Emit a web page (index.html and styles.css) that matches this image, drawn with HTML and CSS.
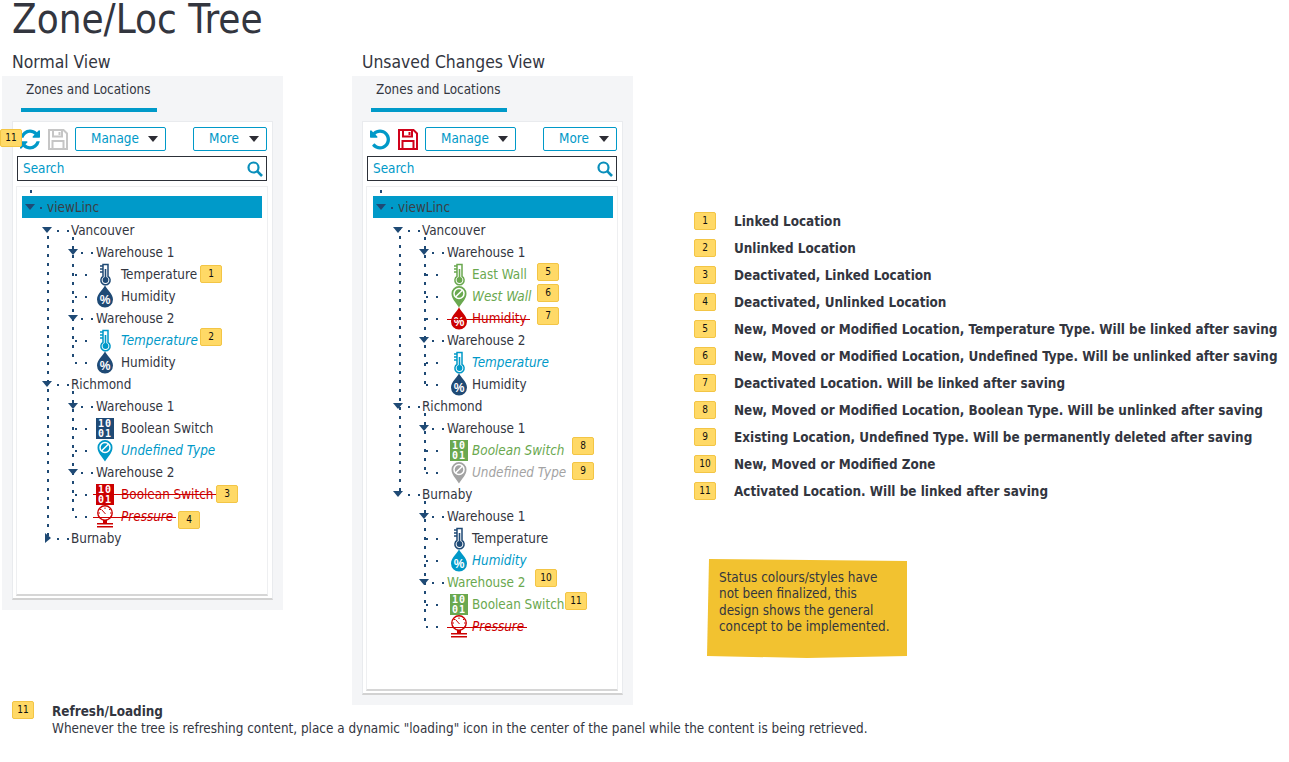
FILE: index.html
```html
<!DOCTYPE html>
<html lang="en">
<head>
    <meta charset="UTF-8">
    <meta name="viewport" content="width=device-width, initial-scale=1.0">
    <title>Zone/Loc Tree</title>
    <link rel="stylesheet" href="styles.css">
</head>
<body>
    <svg class="sprite" xmlns="http://www.w3.org/2000/svg">
        <symbol id="thermo" viewBox="0 0 18 23">
            <path d="M7 1.500h5v11.800a4.600 4.600 0 1 1-5 0z" fill="none" stroke="currentColor" stroke-width="1.500"/>
            <path d="M4 3h3M4 6h3M4 9h3" stroke="currentColor" stroke-width="1.300"/>
            <circle cx="9.500" cy="17" r="2.900" fill="currentColor"/>
            <rect x="8.700" y="6" width="1.600" height="9" fill="currentColor"/>
        </symbol>
        <symbol id="drop" viewBox="0 0 18 23">
            <path d="M9 0c1 4 8 8.500 8 14.500a8 8 0 0 1-16 0C1 8.500 8 4 9 0z" fill="currentColor"/>
        </symbol>
        <symbol id="pin" viewBox="0 0 18 23">
            <path d="M9 22.500C6 17.500 1.500 14 1.500 8.500a7.500 7.500 0 0 1 15 0C16.500 14 12 17.500 9 22.500z" fill="currentColor"/>
            <circle cx="9" cy="8.500" r="5" fill="none" stroke="#fff" stroke-width="1.500"/>
            <path d="M5.700 11.800l6.600-6.600" stroke="#fff" stroke-width="1.500"/>
        </symbol>
        <symbol id="gauge" viewBox="0 0 18 23">
            <circle cx="9" cy="8" r="7.200" fill="none" stroke="currentColor" stroke-width="1.400"/>
            <path d="M5.500 4.500l4 4.500M9 2.500v1.500M4 4l1 1M14 4l-1 1M2.500 8H4M15.500 8H14" stroke="currentColor" stroke-width="1"/>
            <path d="M7 15h4v3H7z" fill="currentColor"/>
            <path d="M1 18.800h16M1 21.800h16" stroke="currentColor" stroke-width="1.600"/>
        </symbol>
        <symbol id="refresh" viewBox="128 128 1536 1536">
            <path fill="currentColor" d="M1639 1056q0 5-1 7-64 268-268 434.500t-478 166.500q-146 0-282.500-55t-243.500-157l-129 129q-19 19-45 19t-45-19-19-45v-448q0-26 19-45t45-19h448q26 0 45 19t19 45-19 45l-137 137q71 66 161 102t187 36q134 0 250-65t186-179q11-17 53-117 8-23 30-23h192q13 0 22.500 9.500t9.500 22.500zm25-800v448q0 26-19 45t-45 19h-448q-26 0-45-19t-19-45 19-45l138-138q-148-137-349-137-134 0-250 65t-186 179q-11 17-53 117-8 23-30 23h-199q-13 0-22.500-9.500t-9.500-22.500v-7q65-268 270-434.500t480-166.500q146 0 284 55.500t245 156.500l130-129q19-19 45-19t45 19 19 45z"/>
        </symbol>
        <symbol id="undo" viewBox="128 128 1536 1536">
            <path fill="currentColor" d="M1664 896q0 156-61 298t-164 245-245 164-298 61q-172 0-327-72.500t-264-204.500q-7-10-6.500-22.500t8.500-20.500l137-138q10-9 25-9 16 2 23 12 73 95 179 147t225 52q104 0 198.500-40.500t163.500-109.500 109.500-163.500 40.500-198.500-40.500-198.500-109.500-163.500-163.500-109.500-198.500-40.500q-98 0-188 35.500t-160 101.500l137 138q31 30 14 69-17 40-59 40h-448q-26 0-45-19t-19-45v-448q0-42 40-59 39-17 69 14l130 129q107-101 244.500-156.500t284.500-55.500q156 0 298 61t245 164 164 245 61 298z"/>
        </symbol>
        <symbol id="save" viewBox="0 0 20 21">
            <path d="M1 1h14.500L19 4.500V20H1z" fill="none" stroke="currentColor" stroke-width="2"/>
            <path d="M5 1.500v6h9v-6M4.500 20v-8h11v8" fill="none" stroke="currentColor" stroke-width="2"/>
            <path d="M10.500 3h2v3h-2z" fill="currentColor"/>
        </symbol>
        <symbol id="search" viewBox="0 0 16 16">
            <circle cx="6.500" cy="6.500" r="5" fill="none" stroke="currentColor" stroke-width="2.200"/>
            <path d="M10.200 10.200L15 15" stroke="currentColor" stroke-width="2.600"/>
        </symbol>
    </svg>

    <h1>Zone/Loc Tree</h1>

    <div class="page">
        <div class="view">
            <h2>Normal View</h2>
            <div class="panel">
                <div class="tab">Zones and Locations</div>
                <div class="card">
                    <div class="toolbar">
                        <span class="tag tag-refresh">11</span>
                        <svg class="tool-icon c-blue"><use href="#refresh"/></svg>
                        <svg class="tool-icon tool-save c-grey"><use href="#save"/></svg>
                        <button class="btn btn-manage">Manage<i class="caret"></i></button>
                        <button class="btn btn-more">More<i class="caret"></i></button>
                    </div>
                    <div class="search">Search<svg class="search-icon"><use href="#search"/></svg></div>
                    <div class="tree tree-normal">
                        <div class="row root"><i class="arrow"></i>viewLinc</div>
                        <div class="row zone first"><i class="arrow"></i>Vancouver</div>
                        <div class="zones zones-normal">
                            <div class="wares">
                                <div class="row ware"><i class="arrow"></i>Warehouse 1</div>
                                <div class="row leaf"><svg class="icon c-navy"><use href="#thermo"/></svg>Temperature<span class="tag tag-a">1</span></div>
                                <div class="row leaf"><span class="icon drop c-navy"><svg><use href="#drop"/></svg><b>%</b></span>Humidity</div>
                                <div class="row ware"><i class="arrow"></i>Warehouse 2</div>
                                <div class="row leaf unlinked"><svg class="icon c-blue"><use href="#thermo"/></svg>Temperature<span class="tag tag-b">2</span></div>
                                <div class="row leaf"><span class="icon drop c-navy"><svg><use href="#drop"/></svg><b>%</b></span>Humidity</div>
                            </div>
                            <div class="row zone"><i class="arrow"></i>Richmond</div>
                            <div class="wares">
                                <div class="row ware"><i class="arrow"></i>Warehouse 1</div>
                                <div class="row leaf"><span class="icon bool c-navy"><b>10<br>01</b></span>Boolean Switch</div>
                                <div class="row leaf unlinked"><svg class="icon c-blue"><use href="#pin"/></svg>Undefined Type</div>
                                <div class="row ware"><i class="arrow"></i>Warehouse 2</div>
                                <div class="row leaf deleted"><span class="struck struck-high"><span class="icon bool"><b>10<br>01</b></span>Boolean Switch</span><span class="tag tag-c">3</span></div>
                                <div class="row leaf deleted unlinked-red"><span class="struck"><svg class="icon"><use href="#gauge"/></svg>Pressure</span><span class="tag tag-d">4</span></div>
                            </div>
                            <div class="row zone"><i class="arrow arrow-right"></i>Burnaby</div>
                        </div>
                    </div>
                </div>
            </div>
            <div class="refresh-note">
                <span class="tag">11</span>
                <div class="refresh-text">
                    <b>Refresh/Loading</b>
                    <p>Whenever the tree is refreshing content, place a dynamic "loading" icon in the center of the panel while the content is being retrieved.</p>
                </div>
            </div>
        </div>

        <div class="view view-changed">
            <h2>Unsaved Changes View</h2>
            <div class="panel">
                <div class="tab">Zones and Locations</div>
                <div class="card">
                    <div class="toolbar">
                        <svg class="tool-icon c-blue"><use href="#undo"/></svg>
                        <svg class="tool-icon tool-save c-red"><use href="#save"/></svg>
                        <button class="btn btn-manage">Manage<i class="caret"></i></button>
                        <button class="btn btn-more">More<i class="caret"></i></button>
                    </div>
                    <div class="search">Search<svg class="search-icon"><use href="#search"/></svg></div>
                    <div class="tree tree-changed">
                        <div class="row root"><i class="arrow"></i>viewLinc</div>
                        <div class="row zone first"><i class="arrow"></i>Vancouver</div>
                        <div class="zones zones-changed">
                            <div class="wares">
                                <div class="row ware"><i class="arrow"></i>Warehouse 1</div>
                                <div class="row leaf added"><svg class="icon"><use href="#thermo"/></svg>East Wall<span class="tag tag-e">5</span></div>
                                <div class="row leaf added unlinked-green"><svg class="icon"><use href="#pin"/></svg>West Wall<span class="tag tag-f">6</span></div>
                                <div class="row leaf deleted"><span class="struck"><span class="icon drop"><svg><use href="#drop"/></svg><b>%</b></span>Humidity</span><span class="tag tag-g">7</span></div>
                                <div class="row ware"><i class="arrow"></i>Warehouse 2</div>
                                <div class="row leaf unlinked"><svg class="icon c-blue"><use href="#thermo"/></svg>Temperature</div>
                                <div class="row leaf"><span class="icon drop c-navy"><svg><use href="#drop"/></svg><b>%</b></span>Humidity</div>
                            </div>
                            <div class="row zone"><i class="arrow"></i>Richmond</div>
                            <div class="wares">
                                <div class="row ware"><i class="arrow"></i>Warehouse 1</div>
                                <div class="row leaf added unlinked-green"><span class="icon bool"><b>10<br>01</b></span>Boolean Switch<span class="tag tag-h">8</span></div>
                                <div class="row leaf removed"><svg class="icon"><use href="#pin"/></svg>Undefined Type<span class="tag tag-i">9</span></div>
                            </div>
                            <div class="row zone"><i class="arrow"></i>Burnaby</div>
                            <div class="wares wares-last">
                                <div class="row ware"><i class="arrow"></i>Warehouse 1</div>
                                <div class="row leaf"><svg class="icon c-navy"><use href="#thermo"/></svg>Temperature</div>
                                <div class="row leaf unlinked"><span class="icon drop c-blue"><svg><use href="#drop"/></svg><b>%</b></span>Humidity</div>
                                <div class="row ware added"><i class="arrow"></i>Warehouse 2<span class="tag tag-j">10</span></div>
                                <div class="row leaf added"><span class="icon bool"><b>10<br>01</b></span>Boolean Switch<span class="tag tag-k">11</span></div>
                                <div class="row leaf deleted unlinked-red"><span class="struck"><svg class="icon"><use href="#gauge"/></svg>Pressure</span></div>
                            </div>
                        </div>
                    </div>
                </div>
            </div>
        </div>

        <div class="side">
            <ul class="legend">
                <li><span class="tag">1</span>Linked Location</li>
                <li><span class="tag">2</span>Unlinked Location</li>
                <li><span class="tag">3</span>Deactivated, Linked Location</li>
                <li><span class="tag">4</span>Deactivated, Unlinked Location</li>
                <li><span class="tag">5</span>New, Moved or Modified Location, Temperature Type. Will be linked after saving</li>
                <li><span class="tag">6</span>New, Moved or Modified Location, Undefined Type. Will be unlinked after saving</li>
                <li><span class="tag">7</span>Deactivated Location. Will be linked after saving</li>
                <li><span class="tag">8</span>New, Moved or Modified Location, Boolean Type. Will be unlinked after saving</li>
                <li><span class="tag">9</span>Existing Location, Undefined Type. Will be permanently deleted after saving</li>
                <li><span class="tag">10</span>New, Moved or Modified Zone</li>
                <li><span class="tag">11</span>Activated Location. Will be linked after saving</li>
            </ul>
            <div class="sticky">Status colours/styles have not been finalized, this design shows the general concept to be implemented.</div>
        </div>
    </div>
</body>
</html>
```

FILE: styles.css
```css
body {
    margin: 0;
    background: #fff;
    color: #33363f;
    font-family: "DejaVu Sans", Verdana, sans-serif;
    font-stretch: condensed;
    font-size: 13.4px;
    overflow: hidden;
}
.sprite {
    position: absolute;
    width: 0;
    height: 0;
}
h1 {
    margin: 0 0 0 12px;
    height: 44px;
    font-size: 40px;
    font-weight: normal;
    line-height: 38px;
}
h2 {
    margin: 0 0 0 10px;
    height: 32px;
    font-size: 17.4px;
    font-weight: normal;
    line-height: 36px;
}
.page {
    display: flex;
    align-items: flex-start;
    padding-left: 2px;
}
.view {
    width: 281px;
    margin-right: 69px;
}
.view-changed {
    margin-right: 61px;
}

/* panel */
.panel {
    padding: 0 10px 10px;
    background: #f4f5f7;
}
.tab {
    width: 136px;
    height: 32px;
    margin-left: 9px;
    padding-left: 5px;
    box-sizing: border-box;
    line-height: 27px;
    box-shadow: 0 4px 0 #009ac9;
}
.card {
    margin-top: 13px;
    padding: 5px 4px 2px 3px;
    background: #fff;
    border: 1px solid #e9ebee;
    border-bottom: 2px solid #d2d2d2;
}
.toolbar {
    position: relative;
    display: flex;
    align-items: center;
    height: 24px;
    padding-left: 4px;
}
.tool-icon {
    flex: none;
    width: 20px;
    height: 21px;
}
.tool-save {
    margin-left: 8px;
}
.btn {
    display: flex;
    align-items: center;
    justify-content: space-between;
    box-sizing: border-box;
    height: 24px;
    padding: 0 7px 2px 15px;
    background: #fff;
    border: 1px solid #0099c8;
    border-radius: 2px;
    color: #0099c8;
    font: inherit;
}
.btn-manage {
    width: 91px;
    margin-left: 7px;
}
.btn-more {
    width: 74px;
    margin-left: 27px;
}
.caret {
    width: 0;
    height: 0;
    margin-top: 2px;
    border: 5px solid transparent;
    border-top: 6px solid #2c2c34;
    border-bottom: 0;
}
.search {
    position: relative;
    box-sizing: border-box;
    width: 250px;
    height: 25px;
    margin: 5px 0 5px 1px;
    padding-left: 5px;
    border: 1px solid #2c3038;
    color: #0099c8;
    line-height: 24px;
}
.search-icon {
    position: absolute;
    right: 3px;
    top: 4px;
    width: 16px;
    height: 16px;
    color: #0a8fbb;
}

/* tree */
.tree {
    position: relative;
    box-sizing: border-box;
    width: 252px;
    padding: 9px 5px 0;
    background: #fff;
    border: 1px solid #eeeff1;
    border-bottom: 2px solid #d6d6d6;
}
.tree-normal {
    height: 410px;
}
.tree-changed {
    height: 505px;
    padding-left: 6px;
    padding-right: 4px;
}
.tree::before {
    content: "";
    position: absolute;
    left: 13px;
    top: 3px;
    width: 2px;
    height: 12px;
    background: repeating-linear-gradient(to bottom, #1f4a75 0 3px, transparent 3px 9px);
}
.row {
    position: relative;
    display: flex;
    align-items: center;
    height: 22px;
    white-space: nowrap;
}
.root {
    padding-left: 25px;
    background: #009ac9;
    color: #3b3f46;
}
.zone {
    padding-left: 49px;
}
.first {
    margin-top: 1px;
}
.ware {
    padding-left: 74px;
}
.leaf {
    padding-left: 74px;
}
.arrow {
    position: absolute;
    top: 8px;
    width: 0;
    height: 0;
    border: 5.500px solid transparent;
    border-top: 6px solid #1f4a75;
    border-bottom: 0;
}
.root .arrow { left: 3px; }
.zone .arrow { left: 20px; }
.ware .arrow { left: 46px; }
.arrow-right {
    top: 6px;
    left: 23px !important;
    border: 5px solid transparent;
    border-left: 6px solid #1f4a75;
    border-right: 0;
}

/* dashes between expander and label */
.row::after {
    content: "";
    position: absolute;
    top: 11px;
    width: 12px;
    height: 2px;
    background: repeating-linear-gradient(to right, #1f4a75 0 2px, transparent 2px 10px);
}
.root::after { left: 18px; width: 2px; }
.zone::after { left: 35px; }
.ware::after { left: 59px; }
.leaf::after { left: 53px; }

/* vertical dotted lines */
.zones, .wares {
    position: relative;
}
.zones::before, .wares::before {
    content: "";
    position: absolute;
    width: 2px;
    background: repeating-linear-gradient(to bottom, #1f4a75 0 3px, transparent 3px 9px);
}
.zones::before {
    left: 25px;
    top: -14px;
    bottom: 11px;
}
.wares::before {
    left: 50px;
    top: -4px;
    bottom: 10px;
}
.zones-changed::before {
    bottom: 146px;
    left: 26px;
}
.tree-changed .wares::before {
    left: 51px;
}

.icon {
    position: relative;
    flex: none;
    display: block;
    width: 18px;
    height: 23px;
    margin-right: 7px;
    overflow: visible;
}
.tree-changed .icon {
    margin-left: 3px;
    margin-right: 4px;
}
.drop svg {
    display: block;
    width: 18px;
    height: 23px;
}
.drop b {
    position: absolute;
    left: 0;
    right: 0;
    top: 9px;
    color: #fff;
    font: bold 12px/12px "Liberation Sans", sans-serif;
    text-align: center;
}
.bool {
    height: 21px;
    background: currentColor;
}
.bool b {
    display: block;
    color: #fff;
    font: bold 10px/10px "DejaVu Sans Mono", monospace;
    letter-spacing: 1px;
    text-align: center;
    padding-top: 1px;
}
.c-blue { color: #0099c8; }
.c-navy { color: #1f4a75; }
.c-grey { color: #c6c6c6; }
.c-red { color: #d0021b; }
.unlinked {
    color: #0099c8;
    font-style: italic;
}
.added {
    color: #6aa84f;
}
.unlinked-green {
    font-style: italic;
}
.removed {
    color: #a3a3a3;
    font-style: italic;
}
.deleted {
    color: #cc0000;
}
.unlinked-red {
    font-style: italic;
}
.struck {
    position: relative;
    display: flex;
    align-items: center;
}
.struck::after {
    content: "";
    position: absolute;
    left: -3px;
    right: -3px;
    top: 12px;
    height: 1px;
    background: #cc0000;
}
.tree-changed .struck::after {
    left: 0;
}
.struck-high::after {
    top: 10px;
}

/* yellow number tags */
.tag {
    display: inline-block;
    box-sizing: border-box;
    width: 22px;
    height: 18px;
    background: #ffd966;
    border: 1px solid #f3c545;
    border-radius: 2px;
    color: #111;
    font-family: "DejaVu Sans", sans-serif;
    font-stretch: condensed;
    font-size: 10px;
    font-style: normal;
    font-weight: normal;
    line-height: 15px;
    text-align: center;
}
.row .tag, .tag-refresh {
    position: absolute;
}
.tag-refresh { left: -16px; top: 2px; z-index: 1; }
.tag-a { left: 178px; top: 2px; }
.tag-b { left: 178px; top: -1px; }
.tag-c { left: 194px; top: 2px; }
.tag-d { left: 156px; top: 6px; }
.tag-e { left: 164px; top: 0; }
.tag-f { left: 164px; top: -1px; }
.tag-g { left: 164px; top: 0; }
.tag-h { left: 199px; top: -2px; }
.tag-i { left: 199px; top: 1px; }
.tag-j { left: 162px; top: -2px; }
.tag-k { left: 192px; top: -1px; }

/* right side */
.legend {
    margin: 163px 0 0;
    padding: 0;
    list-style: none;
    font-weight: bold;
}
.legend li {
    display: flex;
    align-items: center;
    box-sizing: border-box;
    height: 27px;
    padding-top: 2px;
    white-space: nowrap;
}
.legend .tag {
    margin-top: -2px;
    margin-right: 18px;
}
.sticky {
    box-sizing: border-box;
    width: 200px;
    height: 100px;
    margin: 55px 0 0 13px;
    padding: 11px 12px;
    background: #f2c230;
    line-height: 16.300px;
    clip-path: polygon(1% 0, 100% 2%, 100% 97%, 50% 99%, 0 97%);
}
.refresh-note {
    display: flex;
    margin: 91px 0 0 10px;
    white-space: nowrap;
}
.refresh-note .tag {
    flex: none;
    margin-right: 18px;
}
.refresh-text {
    margin-top: 2px;
}
.refresh-text b {
    display: block;
    line-height: 17px;
}
.refresh-text p {
    margin: 0;
    line-height: 17px;
}
```
